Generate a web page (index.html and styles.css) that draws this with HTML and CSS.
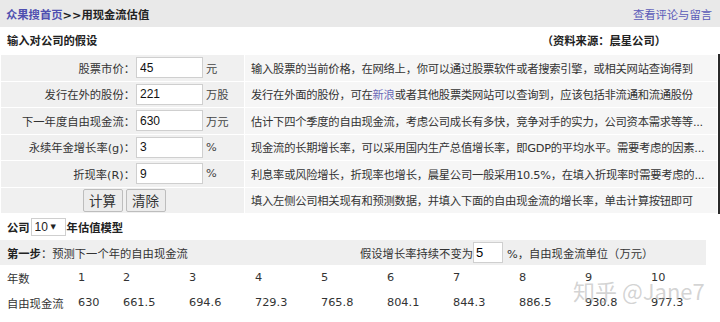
FILE: index.html
```html
<!DOCTYPE html>
<html lang="zh-CN">
<head>
  <meta charset="UTF-8">
  <title>用现金流估值</title>
  <link rel="stylesheet" href="styles.css">
</head>
<body>
  <div class="topbar">
    <div class="crumb"><a href="#">众果搜首页</a>&gt;&gt;用现金流估值</div>
    <a class="comments" href="#">查看评论与留言</a>
  </div>

  <div class="head">
    <span>输入对公司的假设</span>
    <span class="source">（资料来源：晨星公司）</span>
  </div>

  <table class="form">
    <tr>
      <td class="lab"><div class="field"><label>股票市价：</label><input type="text" value="45"><span class="unit">元</span></div></td>
      <td class="note">输入股票的当前价格，在网络上，你可以通过股票软件或者搜索引擎，或相关网站查询得到</td>
    </tr>
    <tr>
      <td class="lab"><div class="field"><label>发行在外的股份：</label><input type="text" value="221"><span class="unit">万股</span></div></td>
      <td class="note">发行在外面的股份，可在<a href="#">新浪</a>或者其他股票类网站可以查询到，应该包括非流通和流通股份</td>
    </tr>
    <tr>
      <td class="lab"><div class="field"><label>下一年度自由现金流：</label><input type="text" value="630"><span class="unit">万元</span></div></td>
      <td class="note">估计下四个季度的自由现金流，考虑公司成长有多快，竞争对手的实力，公司资本需求等等...</td>
    </tr>
    <tr>
      <td class="lab"><div class="field"><label>永续年金增长率(g)：</label><input type="text" value="3"><span class="unit">%</span></div></td>
      <td class="note">现金流的长期增长率，可以采用国内生产总值增长率，即GDP的平均水平。需要考虑的因素...</td>
    </tr>
    <tr>
      <td class="lab"><div class="field"><label>折现率(R)：</label><input type="text" value="9"><span class="unit">%</span></div></td>
      <td class="note">利息率或风险增长，折现率也增长，晨星公司一般采用10.5%，在填入折现率时需要考虑的...</td>
    </tr>
    <tr>
      <td class="lab"><div class="buttons"><button>计算</button><button>清除</button></div></td>
      <td class="note">填入左侧公司相关现有和预测数据，并填入下面的自由现金流的增长率，单击计算按钮即可</td>
    </tr>
  </table>

  <div class="model">
    公司
    <span class="select-box"><select><option>10</option></select><span class="caret">▼</span></span>
    年估值模型
  </div>

  <div class="step">
    <div><strong>第一步</strong>：预测下一个年的自由现金流</div>
    <div class="rate">假设增长率持续不变为<input type="text" value="5"><span>%，自由现金流单位（万元）</span></div>
  </div>

  <div class="data">
    <div class="grid">
      <span class="cn">年数</span>
      <span>1</span><span>2</span><span>3</span><span>4</span><span>5</span>
      <span>6</span><span>7</span><span>8</span><span>9</span><span>10</span>
      <span class="cn">自由现金流</span>
      <span>630</span><span>661.5</span><span>694.6</span><span>729.3</span><span>765.8</span>
      <span>804.1</span><span>844.3</span><span>886.5</span><span>930.8</span><span>977.3</span>
    </div>
    <div class="mark">知乎 @Jane7</div>
  </div>
</body>
</html>
```

FILE: styles.css
```css
body { margin: 0; font: 11.3px "DejaVu Sans", "Noto Sans CJK SC", sans-serif; color: #222; background: #fff; }
a { color: #4f4fb0; text-decoration: none; }

.topbar { height: 27px; display: flex; align-items: center; justify-content: space-between; padding: 0 8px 0 6px; background: #e9e9e9; }
.crumb { font-weight: bold; }
.comments { color: #5a5ab8; }

.head { height: 26px; display: flex; align-items: center; padding-left: 7px; font-weight: bold; }
.source { margin-left: auto; margin-right: 54px; }

.form { margin-top: 1px; width: 720px; table-layout: fixed; border-collapse: separate; border-spacing: 1px; border-right: 2px solid #2a2a2a; }
.form td { height: 25.5px; padding: 0; }
.lab { width: 243px; background: #f0f0f0; }
.note { background: #f6f6f6; padding: 0 4px 0 6px !important; white-space: nowrap; color: #333; letter-spacing: -0.25px; }
.note a { color: #6a6ab8; }

.field { display: flex; align-items: center; }
.field label { width: 134px; text-align: right; color: #333; }
.field input { width: 67px; height: 21px; box-sizing: border-box; margin-left: 1px; padding: 0 3px; border: 1px solid #cfcfcf; font: 12px "Liberation Sans", sans-serif; color: #111; }
.unit { margin-left: 3px; color: #444; }

.buttons { display: flex; justify-content: center; gap: 3px; padding-left: 3px; }
.buttons button { width: 40px; height: 23px; padding: 0; border: 1px solid #bdbdbd; border-radius: 2px; background: #ececec; font: 13.5px "Noto Sans CJK SC", sans-serif; color: #333; }

.model { height: 26px; display: flex; align-items: center; gap: 1px; padding-left: 7px; font-weight: bold; }
.select-box { display: inline-flex; align-items: center; width: 35px; height: 18px; box-sizing: border-box; border: 1px solid #cfcfcf; background: #fff; font-weight: normal; }
.select-box select { appearance: none; border: none; background: none; padding: 0 0 0 3px; font: 12px "Liberation Sans", sans-serif; color: #222; }
.caret { font-size: 7px; margin-left: 2px; color: #222; }

.step { height: 25px; width: 706px; display: grid; grid-template-columns: 353px 1fr; align-items: center; padding-left: 7px; box-sizing: border-box; background: #efefef; color: #333; }
.step strong { color: #222; }
.rate { display: flex; align-items: center; }
.rate input { width: 30px; height: 21px; box-sizing: border-box; padding: 0 2px; border: 1px solid #cfcfcf; font: 13px "Liberation Sans", sans-serif; }
.rate span { margin-left: 4px; }

.data { position: relative; }
.grid { display: grid; grid-template-columns: 71px 45px repeat(9, 66px); grid-auto-rows: 25px; align-items: center; padding-left: 7px; color: #333; }
.mark { position: absolute; left: 573px; top: 14px; font: 22px "Noto Sans CJK SC", sans-serif; line-height: 1; white-space: nowrap; color: rgba(175, 175, 175, 0.55); pointer-events: none; }
```
